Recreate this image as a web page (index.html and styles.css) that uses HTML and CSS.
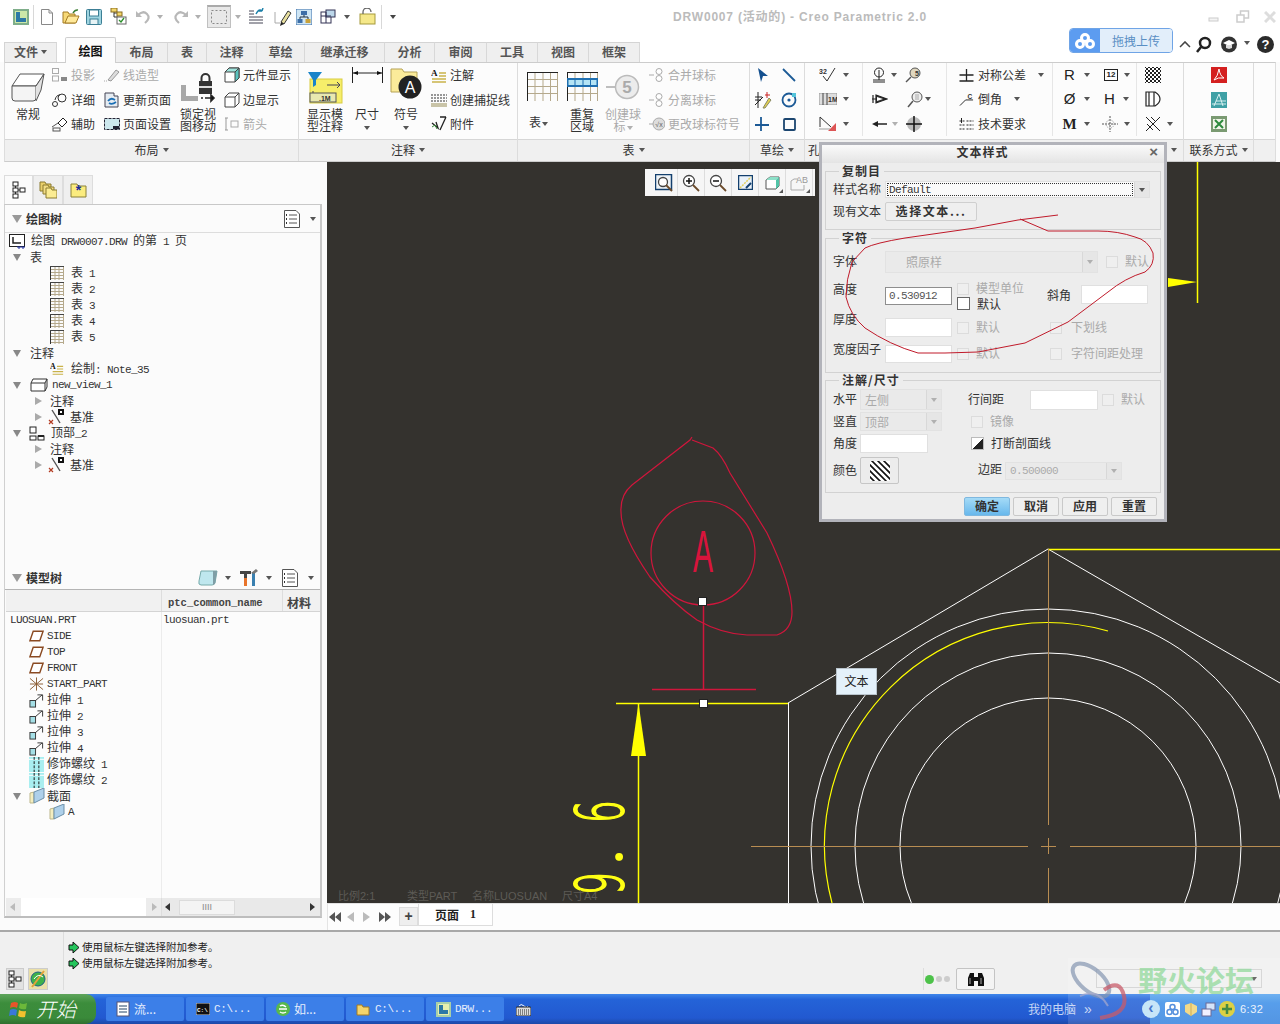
FILE: index.html
```html
<!DOCTYPE html>
<html lang="zh">
<head>
<meta charset="utf-8">
<title>DRW0007 - Creo Parametric 2.0</title>
<link rel="stylesheet" href="styles.css">
</head>
<body>
<svg class="defs" aria-hidden="true">
  <symbol id="tbl" viewBox="0 0 14 14"><path d="M.5 0V14" stroke="#333" fill="none"/><path d="M1 .5H14M1 3.5H14M1 6.5H14M1 9.5H14M1 12.5H14M5 1V14M9 1V14M13.5 1V14" stroke="#b5a98c" fill="none"/><path d="M0 .5H14" stroke="#444"/></symbol>
  <symbol id="datum" viewBox="0 0 16 16"><path d="M4 1l5 8M9 9l3 5" stroke="#555" stroke-width="1.4"/><path d="M1 11l4 4M5 11l-4 4" stroke="#b33c22" stroke-width="1.2"/><rect x="10" y="0" width="6" height="6" fill="#111"/><rect x="12" y="2" width="2" height="2" fill="#fff"/></symbol>
  <symbol id="plane" viewBox="0 0 16 12"><path d="M4.500 1H15L11.500 11H1Z" fill="#fff" stroke="#8a4a22" stroke-width="1.500"/></symbol>
  <symbol id="extr" viewBox="0 0 16 16"><rect x="1" y="8" width="6" height="7" fill="#a5dfe6" stroke="#333"/><path d="M7 8L14 2M9 2H14.500V8" stroke="#333" fill="none"/></symbol>
  <symbol id="thrd" viewBox="0 0 16 16"><rect width="16" height="16" fill="#a9eef0"/><path d="M0 2.500H16" stroke="#fff"/><path d="M5.500 0V16M10.500 0V16" stroke="#111" stroke-dasharray="3 1.500"/></symbol>
  <symbol id="sect" viewBox="0 0 16 16"><path d="M1 5L5 4V15H1Z" fill="#f4eec0" stroke="#bdb78a"/><path d="M5 4L15 0V10L5 15Z" fill="#aed0ea" stroke="#6b8fa8"/></symbol>
  <symbol id="list" viewBox="0 0 16 18"><path d="M.5.500H12L15.500 4V17.500H.5Z" fill="#fff" stroke="#555"/><path d="M5 5H13M5 9H13M5 13H13" stroke="#555"/><path d="M2 5h1M2 9h1M2 13h1" stroke="#333" stroke-width="2"/></symbol>
  <symbol id="tree3" viewBox="0 0 14 18"><path d="M3.500 5V13M4 9H9" stroke="#333"/><rect x="1" y="1" width="5" height="4" fill="#fff" stroke="#222"/><rect x="1" y="7" width="5" height="4" fill="#fff" stroke="#222"/><rect x="1" y="13" width="5" height="4" fill="#fff" stroke="#222"/><rect x="8" y="7" width="5" height="4" fill="#fff" stroke="#222"/></symbol>
  <symbol id="bubble" viewBox="0 0 16 14"><path d="M0 7H5" stroke="#aaa"/><circle cx="10" cy="3.500" r="3" fill="#fff" stroke="#aaa"/><circle cx="10" cy="10.500" r="3" fill="#fff" stroke="#aaa"/></symbol>
</svg>

<div class="app">
  <header class="top">
    <div class="row1">
      <div class="qa">
        <svg width="16" height="16" viewBox="0 0 16 16"><rect width="16" height="16" fill="#7fae8a"/><rect x="2" y="2" width="12" height="12" fill="#cbe8a8"/><path d="M3 3h4v6h6v4H3Z" fill="#2c79a6"/></svg>
        <span class="qsep"></span>
        <svg width="14" height="16" viewBox="0 0 14 16"><path d="M1.500.5H9L12.500 4V15.500H1.500Z" fill="#fff" stroke="#888"/><path d="M9 .5V4H12.500" fill="none" stroke="#888"/></svg>
        <svg width="18" height="15" viewBox="0 0 18 15"><path d="M1 3H6L7 5H13V14H1Z" fill="#f7d977" stroke="#a37b22"/><path d="M3 14L6 7H17L14 14Z" fill="#ffe99a" stroke="#a37b22"/><path d="M11 4Q13 .5 16 1" stroke="#3a7d33" stroke-width="1.500" fill="none"/></svg>
        <svg width="16" height="16" viewBox="0 0 16 16"><rect x=".5" y=".5" width="15" height="15" rx="1" fill="#9fd4e0" stroke="#3c7f95"/><rect x="3.500" y="1" width="9" height="6" fill="#fff" stroke="#3c7f95"/><rect x="4" y="10" width="8" height="5.500" fill="#e8f4f6" stroke="#3c7f95"/></svg>
        <svg width="17" height="17" viewBox="0 0 17 17"><path d="M4 1v8H8M4 5H8" stroke="#333" fill="none"/><rect x="1" y="0" width="6" height="4" fill="#f2d66b" stroke="#8a6d20"/><rect x="7" y="4" width="5" height="4" fill="#f2d66b" stroke="#8a6d20"/><rect x="7" y="9" width="9" height="7" fill="#fff" stroke="#666"/><path d="M9 12l2 2 3-4" stroke="#2a8f2a" fill="none" stroke-width="1.300"/></svg>
        <svg width="16" height="14" viewBox="0 0 16 14"><path d="M3 5Q8 0 12 4T10 13" fill="none" stroke="#b8b8b8" stroke-width="2.200"/><path d="M1 1V7H7Z" fill="#b8b8b8"/></svg>
        <i class="tri lt"></i>
        <svg width="16" height="14" viewBox="0 0 16 14"><path d="M13 5Q8 0 4 4T6 13" fill="none" stroke="#b8b8b8" stroke-width="2.200"/><path d="M15 1V7H9Z" fill="#b8b8b8"/></svg>
        <i class="tri lt"></i>
        <span class="qsel"><svg width="16" height="14" viewBox="0 0 16 14"><rect x=".5" y=".5" width="15" height="13" fill="none" stroke="#888" stroke-dasharray="2 2"/></svg></span>
        <i class="tri lt"></i>
        <svg width="16" height="17" viewBox="0 0 16 17"><path d="M1 3h5M1 6h5M1 9h14M1 12h14M1 15h14" stroke="#445"/><path d="M8 6Q11 0 14 3M14 3L15 0M14 3L11 3" stroke="#1a7fa8" stroke-width="1.400" fill="none"/></svg>
        <svg width="20" height="18" viewBox="0 0 20 18"><path d="M3 4V15M3 15H8" stroke="#aaa"/><path d="M9 14L16 3L19 5L12 16Z" fill="#e8e0a0" stroke="#333"/><path d="M9 14L12 16L8 18Z" fill="#222"/></svg>
        <svg width="16" height="16" viewBox="0 0 16 16"><rect width="16" height="16" fill="#cfe6f5" stroke="#3c6ea8"/><rect x="5" y="2" width="6" height="4" fill="#3c6ea8"/><rect x="1.500" y="10" width="5" height="4" fill="#3c6ea8"/><rect x="9.500" y="10" width="5" height="4" fill="#c9a23a"/><path d="M8 6V8M4 10V8H12V10" stroke="#234" fill="none"/></svg>
        <svg width="16" height="16" viewBox="0 0 16 16"><rect x="1" y="3" width="10" height="11" fill="#fff" stroke="#335"/><rect x="6" y="1" width="9" height="7" fill="#bcd7ea" stroke="#335"/><path d="M1 7H11M6 3V14" stroke="#335"/></svg>
        <i class="tri"></i>
        <svg width="17" height="17" viewBox="0 0 17 17"><rect x="1" y="6" width="15" height="10" fill="#f5e88a" stroke="#a59a3c"/><path d="M4 6V4a4 4 0 0 1 8 0" stroke="#666" fill="none" stroke-width="1.300"/></svg>
        <span class="qsep"></span>
        <i class="tri menu"></i>
      </div>
      <div class="title">DRW0007 (活动的) - Creo Parametric 2.0</div>
      <div class="win">
        <svg width="12" height="12" viewBox="0 0 12 12"><rect x="1" y="7" width="9" height="3" fill="#f4f4f4" stroke="#ccc"/></svg>
        <svg width="14" height="13" viewBox="0 0 14 13"><rect x="4.500" y="1" width="8" height="7" fill="#fff" stroke="#ccc" stroke-width="1.500"/><rect x="1" y="5" width="7" height="7" fill="#fff" stroke="#ccc" stroke-width="1.500"/></svg>
        <svg width="12" height="12" viewBox="0 0 12 12"><path d="M1 1L11 11M11 1L1 11" stroke="#ddd" stroke-width="3"/></svg>
      </div>
    </div>
    <div class="row2">
      <nav class="tabs">
        <span class="tab file">文件<i class="tri"></i></span>
        <span class="tab on">绘图</span>
        <span class="tab w52">布局</span>
        <span class="tab w39">表</span>
        <span class="tab w50">注释</span>
        <span class="tab w48">草绘</span>
        <span class="tab w80">继承迁移</span>
        <span class="tab w50">分析</span>
        <span class="tab w52">审阅</span>
        <span class="tab w51">工具</span>
        <span class="tab w51">视图</span>
        <span class="tab w51">框架</span>
      </nav>
      <div class="rtools">
        <div class="cloud">
          <span class="cloudl"><svg width="22" height="16" viewBox="0 0 22 16"><g fill="none" stroke="#fff" stroke-width="3"><circle cx="11" cy="5" r="3.500"/><circle cx="6" cy="11" r="3.500"/><circle cx="16" cy="11" r="3.500"/></g></svg></span>
          <span class="cloudr">拖拽上传</span>
        </div>
        <svg width="14" height="10" viewBox="0 0 14 10"><path d="M2 8L7 3L12 8" fill="none" stroke="#444" stroke-width="1.500"/><path d="M4 5L7 2L10 5" fill="none" stroke="#888"/></svg>
        <svg width="16" height="17" viewBox="0 0 16 17"><circle cx="9" cy="7" r="5" fill="none" stroke="#222" stroke-width="2.500"/><path d="M5 11L1 16" stroke="#222" stroke-width="2.500"/></svg>
        <svg width="20" height="17" viewBox="0 0 20 17"><circle cx="9" cy="8.500" r="8" fill="#333"/><path d="M3 7L9 4L15 7L9 10Z" fill="#fff"/><path d="M6 9V12L9 13L12 12V9" fill="#ddd"/></svg>
        <i class="tri"></i>
        <svg width="17" height="17" viewBox="0 0 17 17"><circle cx="8.500" cy="8.500" r="8.500" fill="#2b2b2b"/><text x="8.500" y="13" class="svghelp">?</text></svg>
      </div>
    </div>
  </header>

  <section class="ribbon">
    <!-- 布局 -->
    <div class="grp g1">
      <div class="rb">
        <div class="big wb40 mr4">
          <div class="bi"><svg width="34" height="31" viewBox="0 0 34 31"><path d="M1 14L9 2H33L25 14Z" fill="#fff" stroke="#555"/><path d="M1 14H25V26Q25 29 22 29H4Q1 29 1 26Z" fill="#f4f4f4" stroke="#555"/><path d="M25 14L33 2L30 18L25 29" fill="#e2e2e2" stroke="#555"/></svg></div>
          <div class="bl">常规</div>
        </div>
        <div class="col w52">
          <div class="sm dis"><svg width="16" height="14" viewBox="0 0 16 14"><rect x=".5" y=".5" width="6" height="5" fill="none" stroke="#aaa"/><rect x=".5" y="8" width="6" height="5" fill="none" stroke="#aaa"/><rect x="9" y="9" width="6" height="4" fill="#888"/></svg>投影</div>
          <div class="sm"><svg width="16" height="16" viewBox="0 0 16 16"><circle cx="10" cy="6" r="4" fill="none" stroke="#333"/><path d="M8 3Q4 3 3 8" fill="none" stroke="#333"/><circle cx="3" cy="12" r="2.500" fill="none" stroke="#333"/></svg>详细</div>
          <div class="sm"><svg width="16" height="16" viewBox="0 0 16 16"><path d="M6 7L11 2L15 6L10 11Z" fill="#fff" stroke="#222"/><path d="M0 11L6 7" stroke="#555"/><rect x="1" y="12" width="7" height="3" fill="none" stroke="#555"/></svg>辅助</div>
        </div>
        <div class="col w74">
          <div class="sm dis"><svg width="16" height="14" viewBox="0 0 16 14"><path d="M4 12L12 2L15 4L7 13Z" fill="#ddd" stroke="#999"/><path d="M0 13h3" stroke="#aaa" stroke-dasharray="1 1"/></svg>线造型</div>
          <div class="sm"><svg width="16" height="16" viewBox="0 0 16 16"><path d="M1 1H10V4H14V15H1Z" fill="#e6ecf2" stroke="#445"/><path d="M4 9Q7 5 11 8M12 10Q8 13 5 11" stroke="#1b6fb5" stroke-width="1.800" fill="none"/></svg>更新页面</div>
          <div class="sm"><svg width="16" height="14" viewBox="0 0 16 14"><rect x=".5" y="1.500" width="15" height="11" fill="#cde8ee" stroke="#223" stroke-dasharray="3 1"/><rect x="9" y="9" width="6" height="3" fill="#223"/></svg>页面设置</div>
        </div>
        <div class="big wb40 mr6">
          <div class="bi"><svg width="36" height="31" viewBox="0 0 36 31"><path d="M1 13H6V24H18V29H1Z" fill="#a8a8a8"/><rect x="19" y="9" width="13" height="13" fill="#333"/><path d="M22 9V6a4 4 0 0 1 8 0V9" transform="translate(-.5 0)" fill="none" stroke="#333" stroke-width="2"/><rect x="19" y="14" width="13" height="2" fill="#ddd"/><path d="M21 26h2M25 26h6M31 23l3 3-3 3Z" stroke="#222" stroke-width="1.600"/></svg></div>
          <div class="bl">锁定视<br>图移动</div>
        </div>
        <div class="col">
          <div class="sm"><svg width="16" height="16" viewBox="0 0 16 16"><path d="M1 5L5 1H15V11L11 15H1Z" fill="#fff" stroke="#444"/><path d="M5 1H15L11 5H1Z" fill="#9ee3dc" stroke="#444"/><path d="M15 1V11L11 15V5Z" fill="#59c2bd" stroke="#444"/></svg>元件显示</div>
          <div class="sm"><svg width="16" height="16" viewBox="0 0 16 16"><path d="M1 5L5 1H15V11L11 15H1ZM1 5H11V15M11 5L15 1" fill="#fff" stroke="#444"/></svg>边显示</div>
          <div class="sm dis"><svg width="16" height="14" viewBox="0 0 16 14"><path d="M1 1H4M1 13H4M2 1V13" stroke="#999"/><rect x="7" y="4" width="7" height="6" fill="none" stroke="#aaa"/></svg>箭头</div>
        </div>
      </div>
      <div class="rl">布局<i class="tri"></i></div>
    </div>
    <!-- 注释 -->
    <div class="grp g2">
      <div class="rb">
        <div class="big wb40 mr7">
          <div class="bi"><svg width="36" height="33" viewBox="0 0 36 33"><rect x="3" y="8" width="32" height="24" fill="#f6ee6a" stroke="#d8cc40"/><path d="M1 1H15L9 9V14L6 16V9Z" fill="#1a84c9"/><path d="M6 26V20M20 14H33M30 11l3 3-3 3" stroke="#445" fill="none"/><rect x="3" y="22" width="26" height="9" fill="#e8e8b0" stroke="#555"/><text x="12" y="30" class="svgs">.1M</text></svg></div>
          <div class="bl">显示模<br>型注释</div>
        </div>
        <div class="big wb30 mr8">
          <div class="bi atop"><svg width="31" height="18" viewBox="0 0 31 18"><path d="M.5 1V17M30.500 1V17" stroke="#222"/><path d="M1 7H30" stroke="#222"/><path d="M1 7L6 5V9ZM30 7L25 5V9Z" fill="#111"/></svg></div>
          <div class="bl">尺寸<br><i class="tri"></i></div>
        </div>
        <div class="big wb32 mr9">
          <div class="bi atop"><svg width="33" height="33" viewBox="0 0 33 33"><path d="M1 3H12L14 6H27V26H1Z" fill="#fbeb9a" stroke="#b5a257"/><circle cx="20" cy="21" r="11.500" fill="#222"/><text x="20" y="27" class="svga">A</text></svg></div>
          <div class="bl">符号<br><i class="tri"></i></div>
        </div>
        <div class="col">
          <div class="sm"><svg width="16" height="16" viewBox="0 0 16 16"><text x="0" y="9" class="svgb">A</text><path d="M8 6h7M8 9h7M1 12h14M1 15h14" stroke="#c9b24a" stroke-width="1.400"/></svg>注解</div>
          <div class="sm"><svg width="16" height="14" viewBox="0 0 16 14"><path d="M0 2H16M0 5H16M0 8H16" stroke="#333" stroke-dasharray="2 1"/><rect y="10" width="16" height="4" fill="#c9c4a8"/></svg>创建捕捉线</div>
          <div class="sm"><svg width="16" height="16" viewBox="0 0 16 16"><path d="M15 1L9 14M15 1H9M1 7L7 12L5 6" stroke="#222" stroke-width="1.300" fill="none"/><path d="M1 11L4 9L6 13" stroke="#3a8a3a" fill="none"/></svg>附件</div>
        </div>
      </div>
      <div class="rl">注释<i class="tri"></i></div>
    </div>
    <!-- 表 -->
    <div class="grp g3">
      <div class="rb">
        <div class="big wb34 mr6">
          <div class="bi"><svg width="31" height="30" viewBox="0 0 31 30"><path d="M.5 0V29M0 .5H31" stroke="#222" fill="none"/><path d="M1 7.500H31M1 14.500H31M1 21.500H31M8 1V29M16 1V29M23.500 1V29M30.500 1V29" stroke="#b5a98c" fill="none"/></svg></div>
          <div class="bl low">表<i class="tri inl"></i></div>
        </div>
        <div class="big wb34 mr4">
          <div class="bi"><svg width="31" height="30" viewBox="0 0 31 30"><path d="M.5 0V29M0 .5H31" stroke="#222" fill="none"/><path d="M1 14.500H31M1 21.500H31M8 1V29M16 1V29M23.500 1V29M30.500 1V29" stroke="#b5a98c" fill="none"/><rect x=".5" y="7" width="30" height="7" fill="#b4e4f5" stroke="#1f6fb0" stroke-width="2"/><path d="M8 7V14M16 7V14M23.500 7V14" stroke="#1f6fb0"/></svg></div>
          <div class="bl">重复<br>区域</div>
        </div>
        <div class="big wb40 mr6 dis">
          <div class="bi"><svg width="34" height="26" viewBox="0 0 34 26"><path d="M0 13H9" stroke="#aaa" stroke-width="1.500"/><circle cx="21" cy="13" r="11.500" fill="#ececec" stroke="#bbb" stroke-width="1.500"/><text x="21" y="19" class="svgn">5</text></svg></div>
          <div class="bl">创建球<br>标<i class="tri lt inl"></i></div>
        </div>
        <div class="col">
          <div class="sm dis"><svg width="16" height="14"><use href="#bubble"/></svg>合并球标</div>
          <div class="sm dis"><svg width="16" height="14"><use href="#bubble"/></svg>分离球标</div>
          <div class="sm dis"><svg width="16" height="14" viewBox="0 0 16 14"><path d="M0 7H4" stroke="#aaa"/><circle cx="10" cy="7" r="6" fill="#ddd" stroke="#aaa"/><text x="10" y="10" class="svgt">√x</text></svg>更改球标符号</div>
        </div>
      </div>
      <div class="rl">表<i class="tri"></i></div>
    </div>
    <!-- 草绘 -->
    <div class="grp g4">
      <div class="rb grid26">
        <svg width="14" height="16" viewBox="0 0 14 16"><path d="M2 1L12 9H7L5 15Z" fill="#15508f"/></svg>
        <svg width="16" height="16" viewBox="0 0 16 16"><path d="M2 2L14 14" stroke="#1c5a96" stroke-width="1.800"/></svg>
        <svg width="18" height="18" viewBox="0 0 18 18"><path d="M1 6h7M1 9h6M4 1v16M1 14L9 6" stroke="#222" fill="none"/><path d="M9 17L15 7L17 9L11 17Z" fill="#e4d14f" stroke="#886"/><path d="M11 4h5M13 1v6" stroke="#c22" stroke-width="1"/></svg>
        <svg width="16" height="16" viewBox="0 0 16 16"><circle cx="8" cy="8" r="6.500" fill="none" stroke="#1c5a96" stroke-width="1.800"/><circle cx="8" cy="8" r="1.600" fill="#1c5a96"/><rect x="11" y="1" width="4" height="4" fill="#54c4da"/></svg>
        <svg width="16" height="16" viewBox="0 0 16 16"><path d="M6 1V15M0 9H14" stroke="#1c5a96" stroke-width="1.800"/></svg>
        <svg width="13" height="13" viewBox="0 0 13 13"><rect x="1" y="1" width="11" height="11" rx="1" fill="none" stroke="#1c4670" stroke-width="1.800"/></svg>
      </div>
      <div class="rl">草绘<i class="tri"></i></div>
    </div>
    <!-- 孔 -->
    <div class="grp g5">
      <div class="rb">
        <div class="sub s1">
          <div class="ir c"><svg width="18" height="16" viewBox="0 0 18 16"><text x="0" y="7" class="svgs2">32</text><path d="M4 9L8 14L16 1" stroke="#333" fill="none"/></svg><i class="tri"></i></div>
          <div class="ir c"><svg width="18" height="12" viewBox="0 0 18 12"><rect width="18" height="12" fill="#ddd" stroke="#999"/><path d="M4 0V12M8 0V12" stroke="#444"/><text x="9" y="9" class="svgs">1M</text></svg><i class="tri"></i></div>
          <div class="ir c"><svg width="18" height="16" viewBox="0 0 18 16"><path d="M1 1L12 11M1 1V11" stroke="#333" fill="none"/><path d="M0 13H11" stroke="#ccc" stroke-width="2"/><path d="M17 7V15H9Z" fill="#d55"/></svg><i class="tri"></i></div>
        </div>
        <div class="sub s2">
          <div class="ir"><svg class="i20" width="14" height="16" viewBox="0 0 14 16"><circle cx="7" cy="5.500" r="4.500" fill="none" stroke="#222"/><path d="M7 3V10M7 10V13M1 13H13M1 15H13" stroke="#222"/></svg><i class="tri"></i><svg class="m2" width="16" height="16" viewBox="0 0 16 16"><circle cx="10" cy="6" r="5" fill="#e0d8c0" stroke="#555"/><path d="M6 10L1 15" stroke="#555" stroke-width="1.500"/><text x="10" y="9" class="svgs">5</text></svg></div>
          <div class="ir"><svg class="i20" width="16" height="12" viewBox="0 0 16 12"><path d="M1 2V10M4 2L15 6L4 10ZM0 6H15" stroke="#222" fill="#333" stroke-width="1.200"/><path d="M5 4L11 6L5 8Z" fill="#fff"/></svg><span class="sp10"></span><svg class="m2" width="16" height="17" viewBox="0 0 16 17"><circle cx="10" cy="6" r="5" fill="#eee" stroke="#555"/><path d="M6 10L1 16" stroke="#555" stroke-width="1.500"/><path d="M8 3h4v6H8Z" fill="#ccc"/></svg><i class="tri ml4"></i></div>
          <div class="ir"><svg class="i20" width="15" height="8" viewBox="0 0 15 8"><path d="M0 4L6 1V7Z" fill="#222"/><path d="M5 4H15" stroke="#222" stroke-width="1.500"/></svg><i class="tri lt"></i><svg class="m2" width="16" height="16" viewBox="0 0 16 16"><circle cx="8" cy="8" r="7" fill="#bbb"/><path d="M8 0V16M0 8H16" stroke="#111" stroke-width="1.500"/></svg></div>
        </div>
        <div class="sub s3">
          <div class="sm sms"><svg width="15" height="14" viewBox="0 0 14 14"><path d="M0 7H14M0 13H14M7 1V13M3 3" stroke="#222" stroke-width="1.300"/></svg>对称公差<i class="tri ml8"></i></div>
          <div class="sm sms"><svg width="15" height="14" viewBox="0 0 16 14"><path d="M1 14L7 8H15" stroke="#222" fill="none"/><text x="9" y="6.500" class="svgs">C</text></svg>倒角<i class="tri ml8"></i></div>
          <div class="sm sms"><svg width="15" height="12" viewBox="0 0 14 12"><path d="M0 3H5M7 3H14M0 7H5M7 7H14M0 11H5M7 11H14" stroke="#222" stroke-dasharray="2 1"/><path d="M2 0V5" stroke="#222"/></svg>技术要求</div>
        </div>
        <div class="sub s4">
          <div class="ir"><b class="gl">R</b><i class="tri"></i><span class="box12">12</span><i class="tri"></i></div>
          <div class="ir"><b class="gl">Ø</b><i class="tri"></i><b class="gl g2l">H</b><i class="tri"></i></div>
          <div class="ir"><b class="gl ser">M</b><i class="tri"></i><svg class="sv" width="16" height="16" viewBox="0 0 16 16"><path d="M8 0V16M0 8H16" stroke="#555" stroke-dasharray="2 1"/><circle cx="8" cy="8" r="4" fill="none" stroke="#999" stroke-dasharray="1 1"/></svg><i class="tri"></i></div>
        </div>
        <div class="sub s5">
          <div class="ir"><svg width="16" height="16" viewBox="0 0 16 16"><path d="M0 0H16V16H0Z" fill="#fff"/><path d="M0 0L16 16M4 0L16 12M8 0L16 8M12 0L16 4M0 4L12 16M0 8L8 16M0 12L4 16M16 0L0 16M12 0L0 12M8 0L0 8M4 0L0 4M16 4L4 16M16 8L8 16M16 12L12 16" stroke="#222"/></svg></div>
          <div class="ir"><svg width="16" height="16" viewBox="0 0 16 16"><path d="M1 1H10Q15 4 15 8T10 15H1ZM4 1V15M9 1V15" fill="#fff" stroke="#222" stroke-width="1.200"/></svg></div>
          <div class="ir"><svg width="16" height="16" viewBox="0 0 16 16"><path d="M1 1L15 15M15 1L1 15M6 1L11 6M2 8L8 14" stroke="#222"/></svg><i class="tri ml6"></i></div>
        </div>
      </div>
      <div class="rl split"><span>孔</span><i class="tri"></i></div>
    </div>
    <!-- 联系方式 -->
    <div class="grp g6">
      <div class="rb ofc">
        <svg width="16" height="16" viewBox="0 0 16 16"><rect width="16" height="16" fill="#d42020"/><path d="M3 13Q7 9 8 2Q9 9 13 11Q7 10 3 13Z" fill="none" stroke="#fff"/></svg>
        <svg width="16" height="16" viewBox="0 0 16 16"><rect width="16" height="16" fill="#3fa0a5"/><path d="M3 14L8 2L12 14M5 9H15M1 12H15" stroke="#d8f0f0" fill="none"/></svg>
        <svg width="16" height="16" viewBox="0 0 16 16"><rect width="16" height="16" fill="#7a9a72"/><rect x="2" y="3" width="12" height="10" fill="#f0f4e8"/><path d="M4 4L12 12M12 4L4 12" stroke="#2d8a3c" stroke-width="2"/></svg>
      </div>
      <div class="rl">联系方式<i class="tri"></i></div>
    </div>
    <div class="grp g7"><div class="rb"></div><div class="rl"></div></div>
  </section>

  <main class="main">
    <aside class="side">
      <div class="stabs">
        <span class="stab on"><svg width="14" height="18"><use href="#tree3"/></svg></span>
        <span class="stab"><svg width="18" height="18" viewBox="0 0 18 18"><path d="M1 1H6L7 3H12V10H1Z" fill="#e9cf6b" stroke="#8a7a30"/><path d="M4 4H9L10 6H15V13H4Z" fill="#f2dd84" stroke="#8a7a30"/><path d="M7 7H12L13 9H18V17H7Z" fill="#fbec93" stroke="#8a7a30"/></svg></span>
        <span class="stab"><svg width="17" height="15" viewBox="0 0 17 15"><path d="M1 1H7L8 3H16V14H1Z" fill="#fbec7e" stroke="#8a8038"/><text x="8.500" y="12" class="svgstar">*</text></svg></span>
      </div>
      <div class="panel">
        <div class="ph"><i class="tgl"></i><b>绘图树</b><svg class="listi" width="16" height="18"><use href="#list"/></svg><i class="tri ph-tri"></i></div>
        <div class="tree">
          <div class="row root"><svg width="16" height="15" viewBox="0 0 16 15"><rect x=".5" y=".5" width="15" height="12" fill="#fff" stroke="#222"/><path d="M4 3V9H12" stroke="#222" fill="none" stroke-width="1.500"/><path d="M8 13H16M10 13V15M14 13V15" stroke="#1a2a9a"/></svg><span>绘图<span class="m"> DRW0007.DRW </span>的第<span class="m"> 1 </span>页</span></div>
          <div class="row l0"><i class="td"></i><span>表</span></div>
          <div class="row l2"><svg width="14" height="14"><use href="#tbl"/></svg><span>表<span class="m"> 1</span></span></div>
          <div class="row l2"><svg width="14" height="14"><use href="#tbl"/></svg><span>表<span class="m"> 2</span></span></div>
          <div class="row l2"><svg width="14" height="14"><use href="#tbl"/></svg><span>表<span class="m"> 3</span></span></div>
          <div class="row l2"><svg width="14" height="14"><use href="#tbl"/></svg><span>表<span class="m"> 4</span></span></div>
          <div class="row l2"><svg width="14" height="14"><use href="#tbl"/></svg><span>表<span class="m"> 5</span></span></div>
          <div class="row l0"><i class="td"></i><span>注释</span></div>
          <div class="row l2"><svg width="14" height="14" viewBox="0 0 16 16"><text x="0" y="8" class="svgb">A</text><path d="M8 5h7M8 8h7M3 11h12M3 14h12" stroke="#c9b24a" stroke-width="1.400"/></svg><span>绘制<span class="m">: Note_35</span></span></div>
          <div class="row l0"><i class="td"></i><svg class="nv" width="18" height="14" viewBox="0 0 18 14"><path d="M1 5L3 1H17L15 5ZM1 5V13H15V5M15 13L17 9V1" fill="#fff" stroke="#333"/></svg><span class="m">new_view_1</span></div>
          <div class="row l1"><i class="tr"></i><span>注释</span></div>
          <div class="row l1"><i class="tr"></i><svg class="dt" width="16" height="16"><use href="#datum"/></svg><span>基准</span></div>
          <div class="row l0"><i class="td"></i><svg class="tp" width="16" height="15" viewBox="0 0 16 15"><rect x="1" y="1" width="6" height="6" fill="#fff" stroke="#222"/><rect x="1" y="10" width="6" height="4" fill="#fff" stroke="#222"/><rect x="9" y="10" width="6" height="4" fill="#fff" stroke="#222"/><path d="M9 10H15" stroke="#222" stroke-width="2"/></svg><span>顶部<span class="m">_2</span></span></div>
          <div class="row l1"><i class="tr"></i><span>注释</span></div>
          <div class="row l1"><i class="tr"></i><svg class="dt" width="16" height="16"><use href="#datum"/></svg><span>基准</span></div>
        </div>
        <div class="ph ph2"><i class="tgl"></i><b>模型树</b>
          <svg class="cube" width="20" height="16" viewBox="0 0 20 16"><path d="M3 1H19L17 13Q16 15 14 15H3Q0 15 1 11Z" fill="#bfe7ee" stroke="#7aa"/><path d="M15 1H19L17 14L15 15Z" fill="#7f9ea6"/></svg><i class="tri ml7"></i>
          <svg class="tools" width="20" height="19" viewBox="0 0 20 19"><path d="M1 3H12V6H8V18H5V6H1Z" fill="#444"/><rect x="5" y="10" width="3" height="8" fill="#e8742a"/><path d="M13 5H16V18H13Z" fill="#3a80b0"/><path d="M12 5L17 1L19 3L15 6" fill="#777"/></svg><i class="tri ml7"></i>
          <svg class="listi2" width="16" height="18"><use href="#list"/></svg><i class="tri ph-tri"></i>
        </div>
        <div class="mt">
          <div class="mth"><span class="c1"></span><b class="c2">ptc_common_name</b><b class="c3">材料</b></div>
          <div class="mtb">
            <div class="mtl">
              <div class="row mr0"><span class="m">LUOSUAN.PRT</span></div>
              <div class="row mr1"><svg width="15" height="12"><use href="#plane"/></svg><span class="m mi">SIDE</span></div>
              <div class="row mr1"><svg width="15" height="12"><use href="#plane"/></svg><span class="m mi">TOP</span></div>
              <div class="row mr1"><svg width="15" height="12"><use href="#plane"/></svg><span class="m mi">FRONT</span></div>
              <div class="row mr1"><svg width="15" height="14" viewBox="0 0 16 14"><path d="M1 1L15 13M15 1L1 13M8 0V14M1 7H15" stroke="#8a5a30"/></svg><span class="m mi">START_PART</span></div>
              <div class="row mr1"><svg width="15" height="15"><use href="#extr"/></svg><span class="mi">拉伸<span class="m"> 1</span></span></div>
              <div class="row mr1"><svg width="15" height="15"><use href="#extr"/></svg><span class="mi">拉伸<span class="m"> 2</span></span></div>
              <div class="row mr1"><svg width="15" height="15"><use href="#extr"/></svg><span class="mi">拉伸<span class="m"> 3</span></span></div>
              <div class="row mr1"><svg width="15" height="15"><use href="#extr"/></svg><span class="mi">拉伸<span class="m"> 4</span></span></div>
              <div class="row mr1"><svg width="15" height="15"><use href="#thrd"/></svg><span class="mi">修饰螺纹<span class="m"> 1</span></span></div>
              <div class="row mr1"><svg width="15" height="15"><use href="#thrd"/></svg><span class="mi">修饰螺纹<span class="m"> 2</span></span></div>
              <div class="row mrt"><i class="td"></i><svg class="sx" width="16" height="16"><use href="#sect"/></svg><span class="mi">截面</span></div>
              <div class="row mra"><svg width="16" height="16"><use href="#sect"/></svg><span class="m mia">A</span></div>
            </div>
            <div class="mtr"><div class="row mr0b"><span class="m">luosuan.prt</span></div></div>
          </div>
          <div class="sbar">
            <div class="sleft"><i class="al lt2"></i><span class="strack"></span><i class="ar lt2"></i></div>
            <div class="sright"><i class="al"></i><span class="thumb">IIII</span><i class="ar"></i></div>
          </div>
        </div>
      </div>
    </aside>

    <section class="work">
      <div class="canvas">
        <svg class="draw" width="953" height="741" viewBox="327 162 953 741">
          <g fill="none">
            <g stroke="#fff" stroke-width="1">
              <path class="crisp" d="M788.500 903V703"/>
              <path d="M788 703L1048 549L1280 683"/>
              <circle cx="1048" cy="846" r="237"/>
              <circle cx="1048" cy="846" r="193"/>
              <circle cx="1048" cy="846" r="148"/>
            </g>
            <g stroke="#ffff00" stroke-width="1.500">
              <path d="M616 703.500H788M1048 549.500H1280M638.500 703V903M1197.500 162V303"/>
              <path stroke-width="1.200" d="M832 903A223 223 0 0 1 1108 631"/>
            </g>
            <path class="crisp" d="M751 846.500H1028M1041 846.500H1056M1070 846.500H1280M1048.500 549V825M1048.500 838V854M1048.500 868V903" stroke="#b98d52"/>
            <g stroke="#d0163c" stroke-width="1.200">
              <circle cx="703" cy="553" r="52"/>
              <path stroke-width="1.500" d="M703.500 605V689M652 689.500H756"/>
              <path d="M692 437L690 440L632 485Q620 495 621 512Q621 535 650 577Q675 605 697 620Q722 634 747 635H777Q792 630 792 612Q792 585 767 533L730 473Q722 455 713 448L692 440"/>
            </g>
          </g>
          <path d="M638.500 703L631 756H646Z" fill="#ffff00"/>
          <path d="M1197 282L1168 278V287Z" fill="#ffff00"/>
          <rect x="698.500" y="597.500" width="8" height="8" fill="#fff" stroke="#222"/>
          <rect x="699.500" y="699.500" width="8" height="8" fill="#fff" stroke="#222"/>
          <text class="aletter" transform="translate(693 572) scale(.5 1)">A</text>
          <text class="dimtxt" transform="translate(623 895) rotate(-90) scale(.55 1)">9</text>
          <text class="dimdot" transform="translate(623 863) rotate(-90)">.</text>
          <text class="dimtxt" transform="translate(623 823) rotate(-90) scale(.55 1)">6</text>
          <text class="faint" x="338" y="900">比例2:1</text>
          <text class="faint" x="407" y="900">类型PART</text>
          <text class="faint" x="472" y="900">名称LUOSUAN</text>
          <text class="faint" x="562" y="900">尺寸A4</text>
        </svg>
        <div class="ctools">
          <span class="ct"><svg width="18" height="18" viewBox="0 0 18 18"><rect x=".5" y=".5" width="16" height="15" fill="#eef3f7" stroke="#14406e" stroke-width="1.500"/><circle cx="8" cy="8" r="4.500" fill="#fff" stroke="#444" stroke-width="1.300"/><path d="M11 11L17 17" stroke="#6b4a2a" stroke-width="1.800"/></svg></span>
          <span class="ct"><svg width="18" height="18" viewBox="0 0 18 18"><circle cx="7" cy="7" r="5.500" fill="#fff" stroke="#444" stroke-width="1.300"/><path d="M4 7H10M7 4V10" stroke="#111" stroke-width="1.500"/><path d="M11 11L17 17" stroke="#6b4a2a" stroke-width="1.800"/></svg></span>
          <span class="ct"><svg width="18" height="18" viewBox="0 0 18 18"><circle cx="7" cy="7" r="5.500" fill="#fff" stroke="#444" stroke-width="1.300"/><path d="M4 7H10" stroke="#111" stroke-width="1.500"/><path d="M11 11L17 17" stroke="#6b4a2a" stroke-width="1.800"/></svg></span>
          <span class="ct"><svg width="15" height="15" viewBox="0 0 15 15"><rect x=".5" y=".5" width="14" height="14" fill="#eaf2fa" stroke="#14406e" stroke-width="1.500"/><path d="M2 13L13 2" stroke="#e2d060" stroke-width="1.500" stroke-dasharray="2 1"/><path d="M8 13L13 8" stroke="#14406e" stroke-width="2"/></svg></span>
          <span class="ct crn"><svg width="15" height="14" viewBox="0 0 15 14"><path d="M1 4L5 1H14V10L11 13H1Z" fill="#fff" stroke="#555"/><path d="M5 1H14L11 4H1Z" fill="#8de0c8"/><path d="M14 1V10L11 13V4Z" fill="#52c4a8"/></svg></span>
          <span class="ct crn"><svg width="18" height="16" viewBox="0 0 18 16"><path d="M1 6L4 4H8M1 6V15H14V10" stroke="#aaa" fill="none"/><text x="6" y="8" class="svgab">AB</text></svg></span>
        </div>
        <div class="tip">文本</div>
      </div>
      <div class="pbar">
        <svg width="14" height="10" viewBox="0 0 14 10"><path d="M7 0L1 5L7 10ZM13 0L7 5L13 10Z" fill="#555"/></svg>
        <svg width="9" height="10" viewBox="0 0 9 10"><path d="M8 0L1 5L8 10Z" fill="#bbb"/></svg>
        <svg width="9" height="10" viewBox="0 0 9 10"><path d="M1 0L8 5L1 10Z" fill="#bbb"/></svg>
        <svg width="14" height="10" viewBox="0 0 14 10"><path d="M1 0L7 5L1 10ZM7 0L13 5L7 10Z" fill="#555"/></svg>
        <span class="padd">+</span>
        <span class="ptab">页面<span class="pnum">1</span></span>
      </div>
    </section>
  </main>

  <footer class="msg">
    <div class="mleft">
      <div class="micons">
        <span class="mbtn"><svg width="14" height="18"><use href="#tree3"/></svg></span>
        <span class="mbtn alt"><svg width="18" height="20" viewBox="0 0 18 20"><circle cx="9" cy="10" r="7" fill="#3fb24a" stroke="#1d5f8a"/><path d="M3 18L15 2" stroke="#e2a23a" stroke-width="2"/><path d="M5 10Q9 4 14 8" fill="none" stroke="#fff"/></svg></span>
      </div>
      <div class="mtext">
        <div class="ml"><svg width="12" height="13" viewBox="0 0 12 13"><path d="M1 4H5V1L11 6.500L5 12V9H1Z" fill="#25c45c" stroke="#111"/></svg>使用鼠标左键选择附加参考。</div>
        <div class="ml"><svg width="12" height="13" viewBox="0 0 12 13"><path d="M1 4H5V1L11 6.500L5 12V9H1Z" fill="#25c45c" stroke="#111"/></svg>使用鼠标左键选择附加参考。</div>
      </div>
    </div>
    <div class="mright">
      <span class="dots"><i class="d1"></i><i class="d2"></i><i class="d2"></i></span>
      <span class="find"><svg width="18" height="15" viewBox="0 0 18 15"><path d="M1 14V6L3 1H7V14ZM11 14V1H15L17 6V14ZM7 5H11V9H7Z" fill="#111"/><path d="M3 6V12M14 6V12" stroke="#aaa"/></svg></span>
      <span class="search"><i class="tri"></i></span>
    </div>
  </footer>

  <div class="taskbar">
    <div class="start"><svg width="22" height="22" viewBox="0 0 22 22"><path d="M3 5Q7 3 10 5L9 10Q6 8 2 10Z" fill="#e8542a"/><path d="M12 5Q15 7 19 5L18 11Q14 12 11 10Z" fill="#6cb83a"/><path d="M2 12Q5 10 9 12L8 18Q5 16 1 18Z" fill="#3a78d8"/><path d="M11 12Q14 14 18 13L17 19Q13 20 10 18Z" fill="#f2c12e"/></svg><span>开始</span></div>
    <div class="tasks">
      <span class="task"><svg width="14" height="16" viewBox="0 0 14 16"><rect x="1" y="1" width="12" height="14" fill="#fff" stroke="#557"/><path d="M3 5H11M3 8H11M3 11H11" stroke="#246"/></svg>流...</span>
      <span class="task"><svg width="14" height="12" viewBox="0 0 14 12"><rect width="14" height="12" fill="#111" stroke="#ccc"/><text x="1" y="9" class="svgcmd">C:\</text></svg><span class="tl">C:\...</span></span>
      <span class="task"><svg width="14" height="14" viewBox="0 0 14 14"><circle cx="7" cy="7" r="7" fill="#58b84c"/><path d="M3 7H11M4 4Q7 2 10 5M4 10Q7 12 10 10" stroke="#fff" stroke-width="1.500" fill="none"/></svg>如...</span>
      <span class="task"><svg width="15" height="13" viewBox="0 0 15 13"><path d="M1 2H6L7 4H13V12H1Z" fill="#f4d46c" stroke="#a37b22"/></svg><span class="tl">C:\...</span></span>
      <span class="task"><svg width="15" height="15" viewBox="0 0 15 15"><rect width="15" height="15" fill="#a8cfa8"/><rect x="2" y="2" width="11" height="11" fill="#e6efae"/><path d="M3 3h4v5h5v4H3Z" fill="#2c79a6"/></svg><span class="tl">DRW...</span></span>
      <svg class="kbd" width="15" height="13" viewBox="0 0 15 13"><path d="M3 3Q5 0 8 3T12 3" stroke="#fff" fill="none"/><rect y="4" width="15" height="9" rx="1" fill="#ddd" stroke="#222"/><path d="M2 7H13M2 9H13M2 11H13" stroke="#222" stroke-dasharray="1 1"/></svg>
    </div>
    <div class="tdesk">我的电脑<span class="chev">»</span></div>
    <div class="tray">
      <span class="back">‹</span>
      <svg width="15" height="15" viewBox="0 0 15 15"><rect width="15" height="15" rx="2" fill="#fff"/><g fill="none" stroke="#3c7fd8" stroke-width="1.500"><circle cx="7.500" cy="5" r="2.500"/><circle cx="4.500" cy="10" r="2.500"/><circle cx="10.500" cy="10" r="2.500"/></g></svg>
      <svg width="15" height="15" viewBox="0 0 15 15"><path d="M2 3L8 1L14 4V10L8 14L2 10Z" fill="#f0d478"/><path d="M8 1V14" stroke="#c9a23a"/></svg>
      <svg width="15" height="15" viewBox="0 0 15 15"><rect x="5" y="1" width="9" height="7" fill="#cfe0f8" stroke="#558"/><rect x="1" y="7" width="9" height="7" fill="#eef" stroke="#558"/></svg>
      <svg width="16" height="16" viewBox="0 0 16 16"><circle cx="8" cy="8" r="8" fill="#d8c92a"/><path d="M8 3V13M3 8H13" stroke="#2a7a2a" stroke-width="2.500"/></svg>
      <span class="clock">6:32</span>
    </div>
  </div>

  <div class="dialog">
    <div class="dt-bar"><b>文本样式</b><span class="dx">×</span></div>
    <fieldset class="fs f1">
      <legend>复制目</legend>
      <div class="fr h17"><span class="lb w52l">样式名称</span><span class="cmb focus"><span class="cv m">Default</span><i class="cb"><i class="tri"></i></i></span></div>
      <div class="fr h19 mt4"><span class="lb w52l">现有文本</span><span class="pick">选择文本...</span></div>
    </fieldset>
    <fieldset class="fs f2">
      <legend>字符</legend>
      <div class="fr h22"><span class="lb w52l">字体</span><span class="cmb dim w213"><span class="cv dimt ind">照原样</span><i class="cb"><i class="tri lt"></i></i></span><i class="ck ml8"></i><span class="dl ml7">默认</span></div>
      <div class="fr h30 mt8">
        <span class="lb w52l up2">高度</span><span class="ip w67 h18"><span class="m">0.530912</span></span>
        <span class="ckcol"><span class="fr"><i class="ck"></i><span class="dl ml7">模型单位</span></span><span class="fr"><i class="ck act"></i><span class="lb ml7">默认</span></span></span>
        <span class="lb ml12">斜角</span><span class="ip w67 h19 ml10 rise"></span>
      </div>
      <div class="fr h19 mt7"><span class="lb w52l up9">厚度</span><span class="ip w67 h19"></span><i class="ck ml5"></i><span class="dl ml7">默认</span><i class="ck ml50"></i><span class="dl ml9">下划线</span></div>
      <div class="fr h18 mt8"><span class="lb w52l up5">宽度因子</span><span class="ip w67 h18"></span><i class="ck ml5"></i><span class="dl ml7">默认</span><i class="ck ml50"></i><span class="dl ml9">字符间距处理</span></div>
    </fieldset>
    <fieldset class="fs f3">
      <legend>注解/尺寸</legend>
      <div class="fr h21"><span class="lb w27l">水平</span><span class="cmb dim w82"><span class="cv dimt">左侧</span><i class="cb"><i class="tri lt"></i></i></span><span class="lb ml26 w62">行间距</span><span class="ip w68 h20"></span><i class="ck ml4"></i><span class="dl ml7">默认</span></div>
      <div class="fr h19 mt2"><span class="lb w27l">竖直</span><span class="cmb dim w82"><span class="cv dimt">顶部</span><i class="cb"><i class="tri lt"></i></i></span><i class="ck ml29"></i><span class="dl ml7">镜像</span></div>
      <div class="fr h19 mt3"><span class="lb w27l">角度</span><span class="ip w68 h19"></span><i class="ck half ml43"></i><span class="lb ml7">打断剖面线</span></div>
      <div class="fr h27 mt4"><span class="lb w27l">颜色</span><span class="swatch"><svg width="20" height="20" viewBox="0 0 20 20"><rect width="20" height="20" fill="#fff"/><path d="M-2 2L18 22M1-1L21 19M4-4L24 16M-5 5L15 25M7-7L27 13M-8 8L12 28" stroke="#111" stroke-width="1.600"/></svg></span><span class="lb ml79 w27l up2b">边距</span><span class="cmb dim w117 h18"><span class="cv dimt m">0.500000</span><i class="cb"><i class="tri lt"></i></i></span></div>
    </fieldset>
    <div class="dbtns"><span class="btn pri">确定</span><span class="btn">取消</span><span class="btn">应用</span><span class="btn">重置</span></div>
    <svg class="scribble" width="348" height="380" viewBox="819 142 348 380"><path d="M1058 215L1018 220L975 228L905 238Q875 243 865 248L852 262Q846 280 846 297Q850 315 865 328Q890 345 918 353H945L978 352L1025 343L1068 322L1108 292Q1125 278 1145 272Q1155 265 1153 253Q1148 240 1135 237Q1118 231 1098 231H1048L1020 219" fill="none" stroke="#c01a2a" stroke-width="1"/></svg>
  </div>

  <div class="wmark">
    <svg width="62" height="66" viewBox="0 0 62 66"><ellipse cx="23" cy="22" rx="22" ry="11" transform="rotate(40 23 22)" fill="none" stroke="#8496b0" stroke-width="4" opacity=".7"/><path d="M36 32Q52 20 56 38T32 60" fill="none" stroke="#c85b6a" stroke-width="4" opacity=".75"/><path d="M12 38Q30 30 40 48" fill="none" stroke="#aac" stroke-width="2" opacity=".7"/></svg>
    <span class="wtxt">野火论坛</span>
  </div>
</div>
</body>
</html>
```
FILE: styles.css
```css
* { box-sizing: border-box; }
html, body { margin: 0; padding: 0; background: #fbfbfb; }
body { font: 12px/14px "Noto Sans CJK SC", "Liberation Sans", sans-serif; color: #222; }
i { font-style: normal; }
svg { display: block; flex: none; }
.defs { position: absolute; width: 0; height: 0; }

.svgb { font: bold 9px "Liberation Serif", serif; fill: #111; }
.svgs { font: bold 7px "Liberation Sans", sans-serif; fill: #333; }
.svgs2 { font: bold 7px "Liberation Sans", sans-serif; fill: #333; }
.svgt { font: 7px "Liberation Sans", sans-serif; fill: #666; text-anchor: middle; }
.svga { font: 16px "Liberation Sans", sans-serif; fill: #fff; text-anchor: middle; }
.svgn { font: bold 17px "Liberation Sans", sans-serif; fill: #aaa; text-anchor: middle; }
.svghelp { font: bold 13px "Liberation Sans", sans-serif; fill: #fff; text-anchor: middle; }
.svgstar { font: bold 14px "Liberation Sans", sans-serif; fill: #1a2a9a; text-anchor: middle; }
.svgab { font: 9px "Liberation Sans", sans-serif; fill: #999; }
.svgcmd { font: bold 6px "Liberation Mono", monospace; fill: #fff; }

.app { position: relative; width: 1280px; height: 1024px; overflow: hidden; display: flex; flex-direction: column; background: #fbfbfb; }

.tri { display: inline-block; flex: none; width: 0; height: 0; border-left: 3px solid transparent; border-right: 3px solid transparent; border-top: 4px solid #555; }
.tri.lt { border-top-color: #b0b0b0; }
.tri.inl { margin-left: 1px; vertical-align: -1px; }
.tri.menu { border-top-color: #444; }

/* top bars */
.top { height: 62px; display: flex; flex-direction: column; background: #fff; }
.row1 { height: 28px; display: flex; align-items: center; padding-top: 5px; }
.qa { width: 400px; padding-left: 13px; display: grid; align-items: center; justify-items: start; grid-template-columns: 20px 7px 22px 24px 24px 25px 22px 16px 22px 12px 28px 13px 24px 24px 24px 24px 15px 22px 9px 10px; }
.qsep { width: 1px; height: 24px; background: #d8d8d8; }
.qsel { width: 24px; height: 23px; background: #e8e8e8; border: 1px solid #c0c0c0; border-top: 2px solid #aaa; display: flex; align-items: center; justify-content: center; }
.title { flex: 1; text-align: center; font-weight: 700; color: #bbb; letter-spacing: .8px; white-space: nowrap; font-family: "Liberation Sans", "Noto Sans CJK SC", sans-serif; }
.win { width: 80px; padding-left: 8px; display: grid; grid-template-columns: 28px 28px 14px; align-items: center; }

.row2 { height: 34px; display: flex; justify-content: space-between; align-items: flex-start; }
.tabs { margin: 4px 0 0 4px; height: 30px; display: flex; align-items: flex-end; font-weight: 700; color: #555; }
.tab { height: 20px; flex: none; display: flex; align-items: center; justify-content: center; background: #efefef; border-top: 1px solid #d4d4d4; border-right: 1px solid #d8d8d8; line-height: 18px; padding-bottom: 2px; }
.tab.file { width: 53px; gap: 3px; border-left: 1px solid #d4d4d4; margin-right: 8px; }
.tab.on { width: 51px; background: #fcfcfc; color: #111; border: 1px solid #cfcfcf; border-bottom: 0; border-radius: 2px 2px 0 0; position: relative; z-index: 2; margin-bottom: -1px; height: 26px; padding-bottom: 0; }
.w52 { width: 52px; } .w39 { width: 39px; } .w50 { width: 50px; } .w48 { width: 48px; } .w80 { width: 80px; } .w51 { width: 51px; }
.rtools { width: 211px; height: 25px; padding-right: 6px; display: flex; align-items: center; }
.cloud { width: 104px; height: 25px; display: flex; border: 1px solid #6fa4e6; border-radius: 4px; overflow: hidden; margin-right: 5px; flex: none; }
.cloudl { width: 30px; background: #5c9cf0; display: flex; align-items: center; justify-content: center; }
.cloudr { flex: 1; background: #e2eefa; color: #5a8fc4; text-align: center; line-height: 23px; }
.rtools > svg:nth-of-type(1) { margin: 6px 2px 0 0; }
.rtools > svg:nth-of-type(2) { margin: 8px 8px 0 2px; }
.rtools > svg:nth-of-type(3) { margin: 8px 4px 0 0; }
.rtools > svg:nth-of-type(4) { margin: 8px 0 0 7px; }
.rtools > .tri { margin-top: 4px; }

/* ribbon */
.ribbon { margin: 0 4px; height: 100px; display: flex; border-top: 1px solid #ccc; border-left: 1px solid #ddd; border-right: 1px solid #ddd; border-bottom: 1px solid #ccc; background: #fcfcfc; }
.grp { display: flex; flex-direction: column; flex: none; border-right: 1px solid #dcdcdc; }
.g1 { width: 294px; } .g2 { width: 219px; } .g3 { width: 232px; } .g4 { width: 55px; } .g5 { width: 379px; } .g6 { width: 70px; } .g7 { flex: 1; border-right: 0; }
.rb { height: 76px; display: flex; padding-top: 3px; }
.g1 .rb { padding-left: 3px; } .g2 .rb { padding-left: 6px; } .g3 .rb { padding-left: 7px; }
.rl { flex: 1; background: #f0f0f0; border-top: 1px solid #d6d6d6; display: flex; align-items: center; justify-content: center; gap: 4px; color: #333; line-height: 18px; padding-bottom: 2px; }
.rl.split { justify-content: space-between; padding: 0 6px 2px 3px; }
.big { flex: none; display: flex; flex-direction: column; align-items: flex-start; text-align: center; }
.bi { width: 100%; height: 42px; display: flex; align-items: center; justify-content: center; }
.bi.atop { align-items: flex-start; }
.bl { width: 100%; line-height: 12px; color: #333; }
.bl.low { padding-top: 8px; padding-left: 4px; text-align: left; white-space: nowrap; }
.big.dis .bl { color: #aaa; }
.bl .tri { vertical-align: middle; }
.wb40 { width: 40px; } .wb30 { width: 30px; } .wb32 { width: 32px; } .wb34 { width: 34px; }
.mr4 { margin-right: 4px; } .mr6 { margin-right: 6px; } .mr7 { margin-right: 7px; } .mr8 { margin-right: 8px; } .mr9 { margin-right: 9px; }
.w74 { width: 74px; }
.col { display: flex; flex-direction: column; flex: none; margin-top: -3px; }
.sm { height: 24.500px; display: flex; align-items: center; gap: 3px; color: #333; white-space: nowrap; }
.sm.dis { color: #aaa; }
.sms { gap: 4px; padding-left: 12px; }
.grid26 { display: grid; grid-template-columns: 26px 26px; grid-auto-rows: 24.500px; place-items: center; padding-top: 0; }
.sub { height: 73px; margin-top: -3px; display: flex; flex-direction: column; border-right: 1px solid #e6e6e6; flex: none; }
.s1 { width: 58px; } .s2 { width: 84px; } .s3 { width: 106px; } .s4 { width: 84px; } .s5 { width: 47px; border-right: 0; }
.ir { height: 24.500px; display: flex; align-items: center; gap: 6px; }
.ir.c { padding-left: 14px; }
.s2 .ir { padding-left: 9px; gap: 0; }
.s2 .i20 { margin-right: 3px; }
.s2 .m2 { margin-left: 8px; }
.s2 .tri { margin-left: 2px; }
.sp10 { width: 8px; }
.s4 .ir { padding-left: 9px; gap: 0; }
.gl { width: 15px; text-align: center; font: 400 15px/16px "Liberation Sans", sans-serif; color: #222; margin-right: 7px; }
.g2l { margin-left: 12px; margin-right: 6px; }
.ser { font: 700 15px/16px "Liberation Serif", serif; }
.sv { margin-left: 12px; margin-right: 6px; }
.box12 { margin-left: 14px; margin-right: 6px; width: 14px; height: 12px; border: 1px solid #222; font: 700 8px/10px "Liberation Sans", sans-serif; text-align: center; }
.s5 .ir { padding-left: 8px; gap: 0; }
.ofc { flex-direction: column; align-items: center; justify-content: flex-start; gap: 8.500px; padding-top: 4px; }
.ml4 { margin-left: 4px; } .ml5 { margin-left: 5px; } .ml6 { margin-left: 6px; } .ml7 { margin-left: 7px; } .ml8 { margin-left: 8px; } .ml9 { margin-left: 9px; } .ml10 { margin-left: 10px; } .ml12 { margin-left: 12px; } .ml26 { margin-left: 26px; } .ml29 { margin-left: 29px; } .ml43 { margin-left: 43px; } .ml50 { margin-left: 50px; } .ml79 { margin-left: 79px; }

/* main */
.main { height: 768px; display: flex; flex: none; }
.side { width: 327px; flex: none; padding-top: 13px; background: #fbfbfb; }
.stabs { margin-left: 4px; height: 29px; display: flex; }
.stab { width: 30px; height: 29px; background: #efefef; border: 1px solid #ddd; border-bottom: 0; display: flex; align-items: center; justify-content: center; }
.stab.on { width: 29px; background: #fbfbfb; }
.panel { margin-left: 4px; width: 318px; height: 714px; display: flex; flex-direction: column; border-top: 1px solid #c8c8c8; border-left: 1px solid #d0d0d0; border-right: 2px solid #c8c8c8; border-bottom: 2px solid #bdbdbd; }
.ph { height: 28px; flex: none; display: flex; align-items: center; padding-left: 7px; border-bottom: 1px solid #ddd; position: relative; }
.ph b { margin-left: 4px; color: #333; white-space: nowrap; }
.tgl { flex: none; width: 0; height: 0; border-left: 5px solid transparent; border-right: 5px solid transparent; border-top: 8px solid #999; }
.listi { margin-left: 222px; }
.ph-tri { margin-left: 10px; }
.ph2 { height: 24px; border-bottom: 1px solid #b4b4b4; }
.cube { margin-left: 136px; }
.tools { margin-left: 8px; }
.listi2 { margin-left: 10px; }
.tree { height: 333px; flex: none; }
.row { height: 16px; display: flex; align-items: center; white-space: nowrap; color: #333; }
.m { font: 11px/14px "Liberation Mono", monospace; letter-spacing: -.6px; white-space: pre; }
.root { padding-left: 4px; gap: 6px; }
.l0 { padding-left: 8px; }
.l1 { padding-left: 30px; }
.l2 { padding-left: 45px; gap: 7px; }
.td { flex: none; width: 8px; height: 0; border-left: 4px solid transparent; border-right: 4px solid transparent; border-top: 7px solid #888; margin-right: 9px; }
.tr { flex: none; width: 0; height: 0; border-top: 4px solid transparent; border-bottom: 4px solid transparent; border-left: 7px solid #aaa; margin-right: 8px; }
.nv { margin-right: 4px; margin-left: 0; }
.dt { margin-left: -2px; margin-right: 6px; }
.tp { margin-left: -1px; margin-right: 6px; }

.mt { flex: 1; display: flex; flex-direction: column; margin-left: 1px; }
.mth { height: 22px; flex: none; display: flex; align-items: stretch; background: #f1f1f1; border-bottom: 1px solid #d4d4d4; }
.c1 { width: 156px; border-right: 1px solid #ddd; }
.c2 { width: 121px; padding-left: 6px; font: 700 10.500px/26px "Liberation Mono", monospace; color: #444; border-right: 1px solid #ddd; }
.c3 { padding: 6px 0 0 4px; color: #444; }
.mtb { flex: 1; display: flex; background: #fcfcfc; }
.mtl { width: 156px; border-right: 1px solid #ececec; }
.mtr { flex: 1; }
.mr0 { padding-left: 4px; }
.mr0b { padding-left: 1px; }
.mr1 { padding-left: 23px; }
.mi { margin-left: 3px; }
.mrt { padding-left: 7px; }
.mrt .td { margin-right: 8px; }
.sx { margin-right: -1px; }
.mra { padding-left: 43px; }
.mia { margin-left: 3px; }
.sbar { height: 18px; flex: none; display: flex; background: #e9e9e9; }
.sleft { width: 156px; display: flex; align-items: center; padding: 0 4px; background: #ececec; border-right: 1px solid #ddd; }
.strack { flex: 1; height: 100%; background: #fff; margin: 0 6px; }
.sright { flex: 1; display: flex; align-items: center; padding: 0 5px 0 3px; }
.al { width: 0; height: 0; flex: none; border-top: 4px solid transparent; border-bottom: 4px solid transparent; border-right: 5px solid #333; }
.ar { width: 0; height: 0; flex: none; border-top: 4px solid transparent; border-bottom: 4px solid transparent; border-left: 5px solid #333; margin-left: auto; }
.lt2.al { border-right-color: #bbb; }
.lt2.ar { border-left-color: #bbb; margin-left: 0; }
.thumb { width: 56px; height: 15px; margin-left: 9px; background: #f4f4f4; border: 1px solid #dcdcdc; font: 9px/13px "Liberation Sans", sans-serif; text-align: center; color: #888; }

.work { flex: 1; display: flex; flex-direction: column; min-width: 0; }
.canvas { height: 741px; flex: none; position: relative; background: #34322e; overflow: hidden; }
.draw { position: absolute; left: 0; top: 0; }
.crisp { shape-rendering: crispEdges; }
.aletter { font: 60px "Liberation Sans", sans-serif; fill: #d8143c; }
.dimtxt { font: 200 65px "DejaVu Sans", sans-serif; fill: #ffff14; stroke: #ffff14; stroke-width: 2px; }
.dimdot { font: 700 52px Lato, "Liberation Sans", sans-serif; fill: #ffff14; }
.faint { font: 11px "Liberation Sans", "Noto Sans CJK SC", sans-serif; fill: #5d5b56; }
.ctools { position: absolute; left: 318px; top: 7px; height: 27px; width: 170px; background: #f6f6f6; display: flex; }
.ct { width: 27px; height: 27px; border-right: 1px solid #ddd; display: flex; align-items: center; justify-content: center; position: relative; flex: none; }
.ct:first-child { width: 33px; padding-left: 5px; }
.crn::after { content: ""; position: absolute; right: 2px; bottom: 3px; border-left: 4px solid transparent; border-bottom: 4px solid #555; }
.tip { position: absolute; left: 509px; top: 506px; width: 41px; height: 27px; background: #e4f1fa; border: 1px solid #b9c4cc; text-align: center; line-height: 24px; color: #222; }
.pbar { flex: 1; background: #fdfdfd; border-top: 1px solid #e2e2e2; border-left: 1px solid #e4e4e4; display: flex; align-items: center; padding-bottom: 1px; }
.pbar > svg:nth-of-type(2) { margin-left: 4px; }
.pbar > svg:nth-of-type(3) { margin-left: 7px; }
.pbar > svg:nth-of-type(4) { margin-left: 7px; }
.padd { width: 19px; height: 19px; margin-left: 7px; background: #eee; border: 1px solid #ddd; text-align: center; font: 700 14px/16px "Liberation Sans", sans-serif; color: #444; }
.ptab { width: 75px; height: 22px; display: flex; align-items: center; justify-content: center; gap: 11px; align-self: flex-start; border: 1px solid #ddd; border-top: 0; font-weight: 700; background: #fff; white-space: pre; }
.pnum { font: 700 12px "Liberation Serif", serif; }

/* message */
.msg { flex: none; height: 64px; display: flex; justify-content: space-between; background: #f0f0f0; border-top: 2px solid #a8a8a8; }
.mleft { display: flex; }
.micons { width: 64px; padding: 36px 0 0 6px; display: flex; gap: 4px; border-right: 1px solid #ddd; height: 58px; align-self: flex-start; }
.mbtn { width: 18px; height: 22px; background: #e2e2e2; border: 1px solid #ccc; display: flex; align-items: center; justify-content: center; flex: none; }
.mbtn.alt { width: 20px; background: #eadfa8; }
.mtext { padding: 7px 0 0 4px; }
.ml { height: 16px; display: flex; align-items: center; gap: 2px; font-size: 10.500px; color: #222; white-space: nowrap; }
.mright { display: flex; align-items: flex-start; padding: 36px 18px 0 0; }
.dots { width: 33px; height: 22px; display: flex; align-items: center; gap: 2px; padding-left: 1px; border-left: 1px solid #ddd; }
.dots i { border-radius: 50%; }
.d1 { width: 9px; height: 9px; background: #4dc24a; }
.d2 { width: 6px; height: 6px; background: #ccc; }
.find { width: 39px; height: 22px; background: #f4f4f4; border: 1px solid #c4c4c4; border-radius: 2px; display: flex; align-items: center; justify-content: center; }
.search { width: 166px; height: 19px; margin: 1px 0 0 101px; border: 1px solid #d2d2d2; display: flex; align-items: center; justify-content: flex-end; padding-right: 4px; }

/* taskbar */
.taskbar { flex: none; height: 30px; display: flex; align-items: center; color: #fff; background: linear-gradient(#3e86ea 0, #2463d8 18%, #2259d0 80%, #1c49a8 100%); }
.start { width: 96px; height: 30px; flex: none; display: flex; align-items: center; gap: 6px; padding-left: 8px; border-radius: 0 10px 10px 0; background: linear-gradient(#5fa55c, #3c8d3c 30%, #3a8a3a 80%, #2f6f2f); font: italic 300 20px/24px "Noto Sans CJK SC", sans-serif; }
.tasks { margin-left: 10px; display: flex; align-items: center; gap: 2px; flex: none; }
.task { width: 78px; height: 24px; display: flex; align-items: center; gap: 4px; padding-left: 10px; background: #3c7fe8; border-radius: 2px; font-size: 12px; line-height: 24px; white-space: nowrap; color: #e6eefc; }
.tl { font: 11px "Liberation Mono", monospace; letter-spacing: -.4px; }
.kbd { margin-left: 10px; }
.tdesk { margin-left: auto; width: 122px; display: flex; gap: 8px; color: #c6d6f4; white-space: nowrap; flex: none; }
.chev { font: 14px/14px "Liberation Sans", sans-serif; }
.tray { width: 130px; height: 30px; flex: none; display: flex; align-items: center; gap: 3px; background: linear-gradient(#5aa6ef, #3f90e8 30%, #3a86e0); }
.back { width: 18px; height: 18px; border-radius: 50%; background: #bfe2f7; color: #2a62c4; font: 700 16px/15px "Liberation Sans", sans-serif; text-align: center; margin-left: -8px; margin-right: 2px; }
.clock { margin-left: 2px; font: 11px "Liberation Sans", sans-serif; color: #eaf2fc; letter-spacing: .5px; }

/* dialog */
.dialog { position: absolute; left: 819px; top: 142px; width: 348px; height: 380px; background: #ededed; border: 3px solid #b2b3ba; z-index: 5; }
.dt-bar { height: 18px; display: flex; align-items: center; justify-content: center; padding: 0 21px 4px 0; background: linear-gradient(#fafafa, #e4e4e4); position: relative; }
.dt-bar b { color: #333; letter-spacing: 1px; }
.dx { position: absolute; right: 6px; top: -1px; font: 700 15px/15px "Liberation Sans", sans-serif; color: #666; }
.fs { margin: 1px 3px 0 3px; padding: 0 0 0 7px; border: 1px solid #d2d2d2; min-width: 0; }
.fs legend { margin-left: 6px; padding: 0 3px; font-weight: 700; line-height: 14px; color: #333; letter-spacing: 1px; }
.f1 { padding-top: 3px; padding-bottom: 8px; }
.f2 { padding-top: 6px; padding-bottom: 9px; }
.f3 { margin-top: 0; padding-top: 2px; padding-bottom: 8px; }
.fr { display: flex; align-items: center; color: #333; white-space: nowrap; }
.h17 { height: 17px; } .h18 { height: 18px; } .h19 { height: 19px; } .h20 { height: 20px; } .h21 { height: 21px; } .h22 { height: 22px; } .h27 { height: 27px; } .h30 { height: 30px; }
.mt2 { margin-top: 2px; } .mt3 { margin-top: 3px; } .mt4 { margin-top: 4px; } .mt7 { margin-top: 7px; } .mt8 { margin-top: 8px; }
.lb, .dl { flex: none; position: relative; top: -1px; }
.lb { color: #333; }
.dl { color: #aaa; }
.ckcol .lb { top: 0; }
.w52l { width: 52px; } .w27l { width: 27px; } .w62 { width: 62px; }
.up5 { top: -5px; }
.up9 { top: -9px; }
.up2 { align-self: flex-start; padding-top: 1px; top: 0; }
.up2b { top: -2px; }
.ip { flex: none; display: flex; align-items: center; background: #fff; border: 1px solid #e0e0e0; padding-left: 3px; color: #555; }
.ip.w67:has(.m) { border-color: #8e8e8e; }
.w67 { width: 67px; } .w68 { width: 68px; } .w82 { width: 82px; } .w117 { width: 117px; } .w213 { width: 213px; }
.rise { position: relative; top: -2px; }
.cmb { display: flex; flex: none; height: 100%; align-items: stretch; border: 1px solid #e0e0e0; background: #fff; }
.cmb.focus { width: 265px; background: #fafafa; }
.cmb.focus .cv { outline: 1px dotted #333; outline-offset: -1px; margin: 1px; }
.cmb.dim { background: #eaeaea; border-color: #e2e2e2; }
.cmb.h18 { height: 18px; align-self: center; }
.cv { flex: 1; padding-left: 2px; line-height: 14px; display: flex; align-items: center; }
.dimt { color: #aaa; padding-left: 4px; }
.ind { padding-left: 20px; }
.cb { width: 15px; flex: none; background: #e6e6e6; border-left: 1px solid #d8d8d8; display: flex; align-items: center; justify-content: center; }
.ck { width: 12px; height: 12px; flex: none; background: #efefef; border: 1px solid #dcdcdc; }
.ck.act { background: #fff; border-color: #666; width: 13px; height: 13px; }
.ck.half { width: 13px; height: 13px; border-color: #bbb; background: linear-gradient(135deg, #fff 50%, #222 50%); }
.ckcol { display: flex; flex-direction: column; margin-left: 5px; width: 78px; height: 30px; justify-content: space-between; }
.ckcol .fr { height: 15px; }
.pick { width: 92px; height: 19px; text-align: center; font-weight: 700; line-height: 16px; letter-spacing: 1.6px; background: #efefef; border: 1px solid #cfcfcf; border-radius: 2px; }
.swatch { width: 39px; height: 27px; flex: none; background: #ececec; border: 1px solid #c6c6c6; border-radius: 2px; display: flex; align-items: center; justify-content: center; }
.dbtns { margin: 4px 7px 0 0; display: flex; justify-content: flex-end; gap: 3px; }
.btn { width: 46px; height: 19px; text-align: center; font-weight: 700; line-height: 15px; background: #efefef; border: 1px solid #c9c9c9; border-radius: 2px; color: #333; }
.btn.pri { background: linear-gradient(#a5dbf7, #68b8ec); border-color: #7fb8df; }
.scribble { position: absolute; left: -3px; top: -3px; pointer-events: none; }

/* watermark */
.wmark { position: absolute; left: 1068px; top: 958px; width: 212px; height: 66px; display: flex; background: rgba(255, 255, 255, .13); pointer-events: none; z-index: 6; }
.wtxt { margin: 5px 0 0 8px; font: 700 29px/32px "Noto Sans CJK SC", sans-serif; color: rgba(150, 218, 160, .8); white-space: nowrap; }
```
